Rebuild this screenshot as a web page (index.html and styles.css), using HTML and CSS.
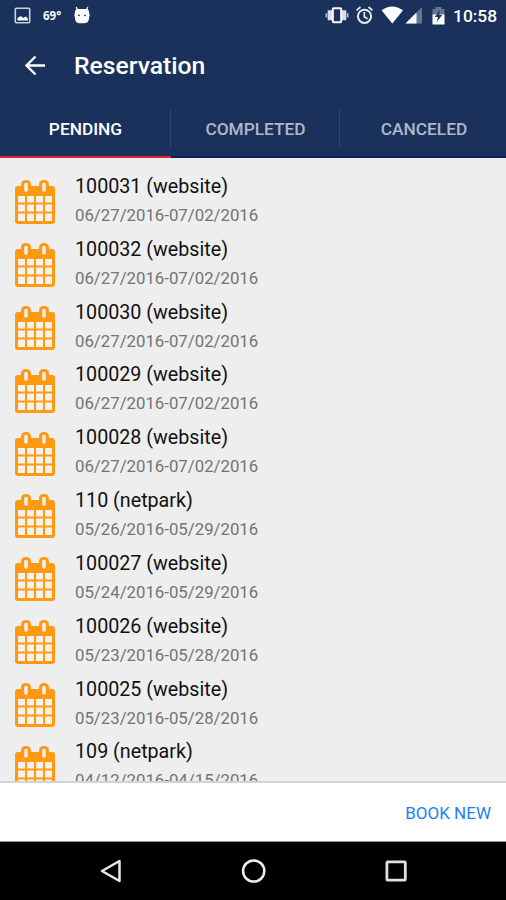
FILE: index.html
```html
<!DOCTYPE html>
<html lang="en">
<head>
    <meta charset="UTF-8">
    <title>Reservation</title>
    <link rel="stylesheet" href="styles.css">
</head>
<body>
    <svg class="defs">
        <symbol id="calendar" viewBox="0 0 40 44">
            <path d="M3 6H37Q40 6 40 9V41Q40 44 37 44H3Q0 44 0 41V9Q0 6 3 6Z" fill="#ff9911"/>
            <rect x="6" y="0" width="10" height="13" rx="4.5" fill="#ff9911"/>
            <rect x="24" y="0" width="10" height="13" rx="4.5" fill="#ff9911"/>
            <rect x="9.2" y="2.7" width="3.6" height="9" rx="1.6" fill="#eee"/>
            <rect x="27.2" y="2.7" width="3.6" height="9" rx="1.6" fill="#eee"/>
            <path d="M3 16H10V22.5H3ZM12 16H19V22.5H12ZM21 16H28V22.5H21ZM30 16H37V22.5H30ZM3 24.5H10V31.5H3ZM12 24.5H19V31.5H12ZM21 24.5H28V31.5H21ZM30 24.5H37V31.5H30ZM3 33.5H10V41H3ZM12 33.5H19V41H12ZM21 33.5H28V41H21ZM30 33.5H37V41H30Z" fill="#f5f1ec"/>
        </symbol>
    </svg>

    <div class="screen">
        <header class="header">
            <div class="status-bar">
                <svg class="status-picture" width="18" height="18" viewBox="0 0 18 18">
                    <rect x="1.3" y="1.3" width="14.4" height="14.4" rx="1" fill="none" stroke="#c9d0dd" stroke-width="1.6"/>
                    <path d="M3.5 13.5V11L7 9L9 11L12 9.5L14 12V13.5Z" fill="#fff"/>
                </svg>
                <span class="temperature">69°</span>
                <svg class="status-robot" width="18" height="18" viewBox="0 0 18 18">
                    <path d="M4.5 4L3.2 1M13.5 4L14.8 1" stroke="#fff" stroke-width="1.3"/>
                    <path d="M2 6Q2 3 5 3H13Q16 3 16 6Q17.3 9 16 12Q16 17.3 11 17.3H7Q2 17.3 2 12Q0.7 9 2 6Z" fill="#fff"/>
                    <circle cx="6" cy="9.3" r="0.9" fill="#1a325b"/>
                    <circle cx="12" cy="9.3" r="0.9" fill="#1a325b"/>
                </svg>
                <svg class="status-icons" width="124" height="20" viewBox="326 6 124 20">
                    <!-- vibrate -->
                    <path d="M326.4 13.2V17.4M347.6 13.2V17.4" stroke="#aeb8c8" stroke-width="1.8"/>
                    <path d="M329.9 10.3V20.3M344.1 10.3V20.3" stroke="#d8dce4" stroke-width="4.4"/>
                    <rect x="332.8" y="8.3" width="8.4" height="14" rx="1" fill="none" stroke="#fff" stroke-width="2"/>
                    <!-- alarm -->
                    <circle cx="364.5" cy="16.3" r="6.6" fill="none" stroke="#e8ebf0" stroke-width="2"/>
                    <path d="M364.3 12V16.7L367.6 18.7M356.5 10.3L360.5 7M368.5 7L372.5 10.3" fill="none" stroke="#e8ebf0" stroke-width="1.7"/>
                    <!-- wifi -->
                    <path d="M381.5 10.3Q392 2.5 403 10.3L392.3 23.5Z" fill="#fff"/>
                    <!-- signal -->
                    <path d="M405.5 23.5L422 7V23.5Z" fill="#64758f"/>
                    <path d="M405.5 23.5L416.5 12.5V23.5Z" fill="#fff"/>
                    <!-- battery -->
                    <path d="M432.5 9H435.5V7H441.5V9H444.5V15H432.5Z" fill="#64758f"/>
                    <path d="M432.5 14.5H444.5V24.5H432.5Z" fill="#fff"/>
                    <path d="M440 10L434.8 17H438L436.8 22L442.2 15H439Z" fill="#1a325b"/>
                </svg>
                <span class="clock">10:58</span>
            </div>
            <div class="toolbar">
                <svg class="back" width="22" height="22" viewBox="0 0 22 22">
                    <path d="M21 10.5H3M11.5 1.5L2.5 10.5L11.5 19.5" fill="none" stroke="#fff" stroke-width="2.4"/>
                </svg>
                <h1 class="title">Reservation</h1>
            </div>
            <nav class="tabs">
                <a class="tab active">PENDING</a>
                <a class="tab">COMPLETED</a>
                <a class="tab">CANCELED</a>
            </nav>
        </header>

        <ul class="list">
            <li class="item">
                <svg class="calendar"><use href="#calendar"/></svg>
                <div><div class="name">100031 (website)</div><div class="dates">06/27/2016-07/02/2016</div></div>
            </li>
            <li class="item">
                <svg class="calendar"><use href="#calendar"/></svg>
                <div><div class="name">100032 (website)</div><div class="dates">06/27/2016-07/02/2016</div></div>
            </li>
            <li class="item">
                <svg class="calendar"><use href="#calendar"/></svg>
                <div><div class="name">100030 (website)</div><div class="dates">06/27/2016-07/02/2016</div></div>
            </li>
            <li class="item">
                <svg class="calendar"><use href="#calendar"/></svg>
                <div><div class="name">100029 (website)</div><div class="dates">06/27/2016-07/02/2016</div></div>
            </li>
            <li class="item">
                <svg class="calendar"><use href="#calendar"/></svg>
                <div><div class="name">100028 (website)</div><div class="dates">06/27/2016-07/02/2016</div></div>
            </li>
            <li class="item">
                <svg class="calendar"><use href="#calendar"/></svg>
                <div><div class="name">110 (netpark)</div><div class="dates">05/26/2016-05/29/2016</div></div>
            </li>
            <li class="item">
                <svg class="calendar"><use href="#calendar"/></svg>
                <div><div class="name">100027 (website)</div><div class="dates">05/24/2016-05/29/2016</div></div>
            </li>
            <li class="item">
                <svg class="calendar"><use href="#calendar"/></svg>
                <div><div class="name">100026 (website)</div><div class="dates">05/23/2016-05/28/2016</div></div>
            </li>
            <li class="item">
                <svg class="calendar"><use href="#calendar"/></svg>
                <div><div class="name">100025 (website)</div><div class="dates">05/23/2016-05/28/2016</div></div>
            </li>
            <li class="item">
                <svg class="calendar"><use href="#calendar"/></svg>
                <div><div class="name">109 (netpark)</div><div class="dates">04/12/2016-04/15/2016</div></div>
            </li>
        </ul>

        <div class="actions">
            <a class="book">BOOK NEW</a>
        </div>

        <div class="nav-bar">
            <svg width="24" height="26" viewBox="0 0 24 26">
                <path d="M3 13L20.5 3V23Z" fill="none" stroke="#e8e8e8" stroke-width="2.5" stroke-linejoin="round"/>
            </svg>
            <svg width="26" height="26" viewBox="0 0 26 26">
                <circle cx="12.7" cy="13" r="10.6" fill="none" stroke="#eee" stroke-width="2.5"/>
            </svg>
            <svg width="24" height="26" viewBox="0 0 24 26">
                <rect x="2.9" y="3.9" width="18.4" height="18.2" rx="0.8" fill="none" stroke="#e0e0e0" stroke-width="2.8"/>
            </svg>
        </div>
    </div>
</body>
</html>
```

FILE: styles.css
```css
body {
    margin: 0;
    font-family: Roboto, sans-serif;
}

.defs {
    display: none;
}

.screen {
    display: flex;
    flex-direction: column;
    width: 506px;
    height: 900px;
    overflow: hidden;
    background-color: #eee;
}

.header {
    height: 158px;
    flex: none;
    background-color: #1a325b;
    color: #fff;
}

.status-bar {
    display: flex;
    align-items: center;
    height: 31px;
    padding: 0 9px 0 14px;
}

.temperature {
    width: 20px;
    margin-left: 11px;
    font: bold 11.5px "Open Sans", sans-serif;
}

.status-robot {
    margin-left: 10px;
    margin-bottom: 2px;
}

.status-icons {
    margin-left: auto;
    overflow: visible;
}

.clock {
    width: 44px;
    margin-left: 3px;
    font-size: 17.4px;
    font-weight: 500;
    white-space: nowrap;
}

.toolbar {
    display: flex;
    align-items: center;
    height: 69px;
    padding-left: 24px;
}

.title {
    margin: 0 0 0 28px;
    font-size: 24.7px;
    font-weight: 500;
}

.tabs {
    display: flex;
    height: 58px;
}

.tab {
    display: flex;
    flex: none;
    align-items: center;
    justify-content: center;
    box-sizing: border-box;
    width: 169px;
    height: 58px;
    padding-top: 2px;
    border-bottom: 2px solid #0c2156;
    background: linear-gradient(#304668, #304668) right 9px / 1px 39px no-repeat;
    color: #aeb8c9;
    font-size: 17.3px;
    font-weight: 500;
}

.tab.active {
    width: 171px;
    border-bottom-color: #da252d;
    color: #fff;
}

.tab:last-child {
    width: 166px;
    padding-left: 2px;
    background: none;
}

.list {
    flex: 1;
    min-height: 0;
    margin: 0;
    padding: 12px 0 0;
    overflow: hidden;
    list-style: none;
}

.item {
    display: flex;
    height: 62.83px;
    padding-left: 15px;
}

.calendar {
    width: 40px;
    height: 44px;
    margin: 10.3px 20px 0 0;
}

.name {
    height: 32px;
    line-height: 34px;
    font-size: 19.7px;
    color: #111;
}

.dates {
    height: 25px;
    line-height: 26px;
    font-size: 16.8px;
    color: #747474;
}

.actions {
    display: flex;
    flex: none;
    align-items: center;
    justify-content: flex-end;
    box-sizing: border-box;
    height: 61px;
    padding: 1px 15px 0 0;
    border-top: 2px solid #d3d3d3;
    border-bottom: 1px solid #999;
    background-color: #fff;
}

.book {
    color: #1782f5;
    font-size: 17px;
}

.nav-bar {
    display: flex;
    flex: none;
    align-items: center;
    justify-content: space-between;
    box-sizing: border-box;
    height: 58px;
    padding: 0 98px 0 99px;
    background-color: #000;
}
```
